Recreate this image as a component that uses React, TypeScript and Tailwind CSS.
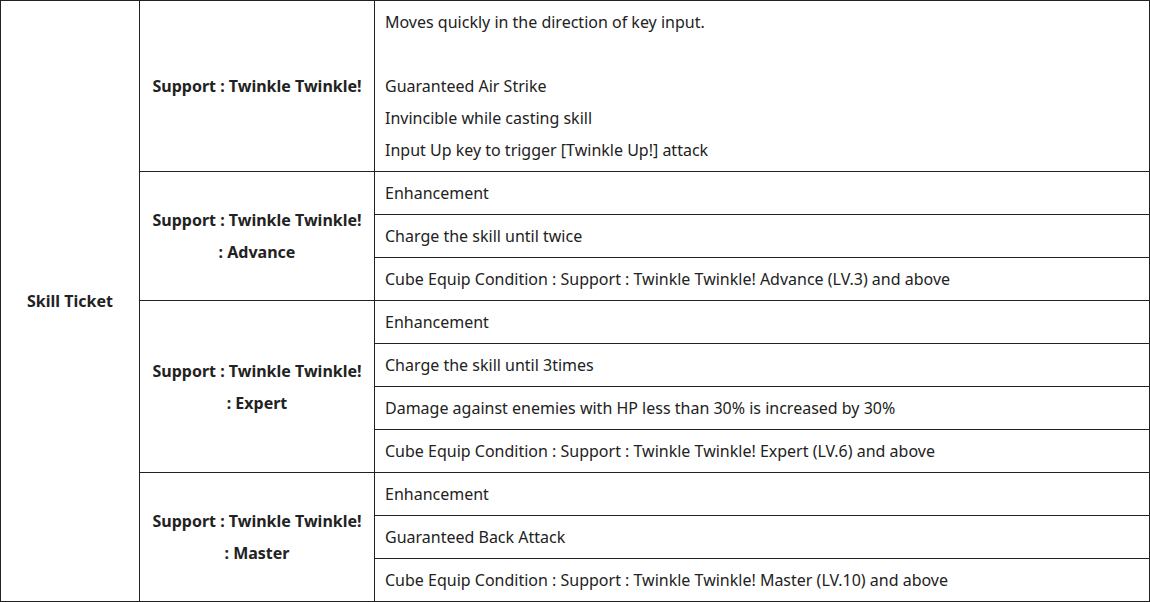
const groups = [
  {
    title: ["Support : Twinkle Twinkle!"],
    rows: [
      [
        "Moves quickly in the direction of key input.",
        "",
        "Guaranteed Air Strike",
        "Invincible while casting skill",
        "Input Up key to trigger [Twinkle Up!] attack",
      ],
    ],
  },
  {
    title: ["Support : Twinkle Twinkle!", ": Advance"],
    rows: [
      ["Enhancement"],
      ["Charge the skill until twice"],
      ["Cube Equip Condition : Support : Twinkle Twinkle! Advance (LV.3) and above"],
    ],
  },
  {
    title: ["Support : Twinkle Twinkle!", ": Expert"],
    rows: [
      ["Enhancement"],
      ["Charge the skill until 3times"],
      ["Damage against enemies with HP less than 30% is increased by 30%"],
      ["Cube Equip Condition : Support : Twinkle Twinkle! Expert (LV.6) and above"],
    ],
  },
  {
    title: ["Support : Twinkle Twinkle!", ": Master"],
    rows: [
      ["Enhancement"],
      ["Guaranteed Back Attack"],
      ["Cube Equip Condition : Support : Twinkle Twinkle! Master (LV.10) and above"],
    ],
  },
];

const totalRows = groups.reduce((n, g) => n + g.rows.length, 0);

export default function App() {
  return (
    <div className="w-[1150px] bg-white font-['Noto_Sans',sans-serif] text-[16px] leading-[32px] text-[#222]">
      <table className="w-full table-fixed border-collapse">
        <colgroup>
          <col className="w-[139px]" />
          <col className="w-[235px]" />
          <col />
        </colgroup>
        <tbody>
          {groups.map((g, gi) =>
            g.rows.map((lines, ri) => (
              <tr key={`${gi}-${ri}`}>
                {gi === 0 && ri === 0 && (
                  <td
                    rowSpan={totalRows}
                    className="border border-[#222] text-center font-bold"
                  >
                    Skill Ticket
                  </td>
                )}
                {ri === 0 && (
                  <td
                    rowSpan={g.rows.length}
                    className="border border-[#222] px-[10px] text-center font-bold"
                  >
                    {g.title.map((t, i) => (
                      <div key={i}>{t}</div>
                    ))}
                  </td>
                )}
                <td className="border border-[#222] px-[10px] py-[5px]">
                  {lines.map((l, i) => (
                    <div key={i} className="h-[32px]">
                      {l}
                    </div>
                  ))}
                </td>
              </tr>
            ))
          )}
        </tbody>
      </table>
    </div>
  );
}
